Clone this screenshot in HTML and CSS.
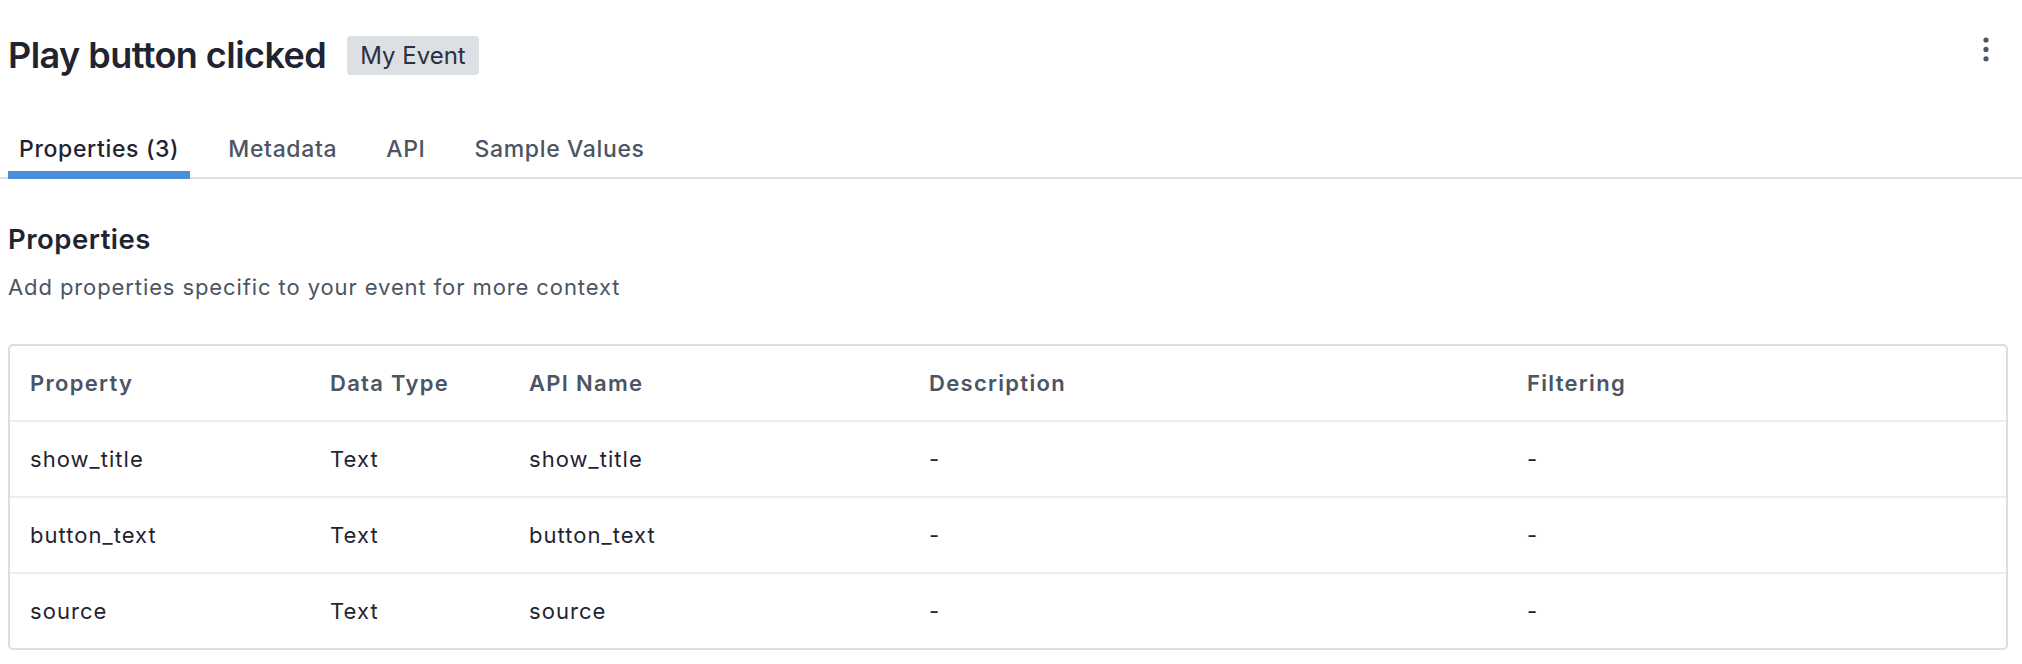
FILE: index.html
```html
<!DOCTYPE html>
<html lang="en">
<head>
<meta charset="utf-8">
<title>Play button clicked</title>
<link rel="stylesheet" href="styles.css">
</head>
<body>
<div class="page">
  <header class="event-header">
    <h1 class="event-title">Play button clicked</h1>
    <span class="badge">My Event</span>
    <button class="kebab" aria-label="More actions">
      <svg width="44" height="30" viewBox="0 0 44 30">
        <circle cx="22" cy="7" r="2.6" fill="#4b5563"/>
        <circle cx="22" cy="16.4" r="2.6" fill="#4b5563"/>
        <circle cx="22" cy="25.8" r="2.6" fill="#4b5563"/>
      </svg>
    </button>
  </header>

  <nav class="tabs">
    <a class="tab active">Properties (3)</a>
    <a class="tab">Metadata</a>
    <a class="tab">API</a>
    <a class="tab">Sample Values</a>
  </nav>

  <section class="content">
    <h2 class="section-title">Properties</h2>
    <p class="section-sub">Add properties specific to your event for more context</p>

    <div class="table-wrap">
      <table class="prop-table">
        <colgroup>
          <col class="c-prop">
          <col class="c-type">
          <col class="c-api">
          <col class="c-desc">
          <col class="c-filter">
        </colgroup>
        <thead>
          <tr>
            <th>Property</th>
            <th>Data Type</th>
            <th>API Name</th>
            <th>Description</th>
            <th>Filtering</th>
          </tr>
        </thead>
        <tbody>
          <tr>
            <td>show_title</td>
            <td>Text</td>
            <td>show_title</td>
            <td>-</td>
            <td>-</td>
          </tr>
          <tr>
            <td>button_text</td>
            <td>Text</td>
            <td>button_text</td>
            <td>-</td>
            <td>-</td>
          </tr>
          <tr>
            <td>source</td>
            <td>Text</td>
            <td>source</td>
            <td>-</td>
            <td>-</td>
          </tr>
        </tbody>
      </table>
    </div>
  </section>
</div>
</body>
</html>
```
FILE: styles.css
```css
* { box-sizing: border-box; }

html, body {
  margin: 0;
  padding: 0;
  background: #ffffff;
}

body {
  font-family: Inter, "Noto Sans", "Liberation Sans", sans-serif;
  color: #1f2531;
}

.page {
  width: 100%;
}

.event-header {
  display: flex;
  align-items: center;
  padding: 33px 14px 0 8px;
}

.event-title {
  margin: 0;
  font-size: 36px;
  line-height: 44px;
  font-weight: 600;
  color: #1f2430;
  letter-spacing: -0.55px;
}

.badge {
  margin-left: 21px;
  height: 39px;
  line-height: 39px;
  padding: 0 13px;
  background: #dcdfe3;
  border-radius: 4px;
  font-size: 24px;
  color: #2b313c;
}

.kebab {
  margin-left: auto;
  align-self: flex-start;
  padding: 0;
  border: 0;
  background: transparent;
  display: block;
  height: 30px;
}

.kebab svg { display: block; }

.tabs {
  display: flex;
  gap: 27px;
  margin-top: 58px;
  padding-left: 8px;
  box-shadow: inset 0 -2px 0 #dcdfe3;
}

.tab {
  display: block;
  padding: 0 11px 8px 11px;
  font-size: 23px;
  line-height: 28px;
  font-weight: 500;
  letter-spacing: 0.65px;
  color: #4b5563;
  border-bottom: 8px solid transparent;
}

.tab.active {
  color: #1f2430;
  border-bottom-color: #4d8edb;
}

.content {
  padding: 0 14px 0 8px;
}

.section-title {
  margin: 43px 0 0;
  font-size: 27.5px;
  line-height: 34px;
  font-weight: 600;
  letter-spacing: 0.5px;
  color: #1f2430;
}

.section-sub {
  margin: 16px 0 0;
  font-size: 22px;
  line-height: 30px;
  letter-spacing: 0.9px;
  color: #4b5563;
}

.table-wrap {
  margin-top: 42px;
  border: 2px solid #dadde1;
  border-radius: 5px;
  overflow: hidden;
}

.prop-table {
  width: 100%;
  border-collapse: collapse;
  table-layout: fixed;
}

.c-prop { width: 300px; }
.c-type { width: 199px; }
.c-api { width: 400px; }
.c-desc { width: 598px; }
.c-filter { width: auto; }

.prop-table th,
.prop-table td {
  text-align: left;
  padding: 22px 20px 22px 20px;
  font-size: 22px;
  line-height: 30px;
  white-space: nowrap;
}

.prop-table th {
  font-weight: 600;
  letter-spacing: 1.3px;
  color: #4b5563;
}

.prop-table td {
  font-weight: 400;
  letter-spacing: 1.05px;
  color: #1f2430;
}

.prop-table tbody tr {
  border-top: 2px solid #eceef0;
}
```
